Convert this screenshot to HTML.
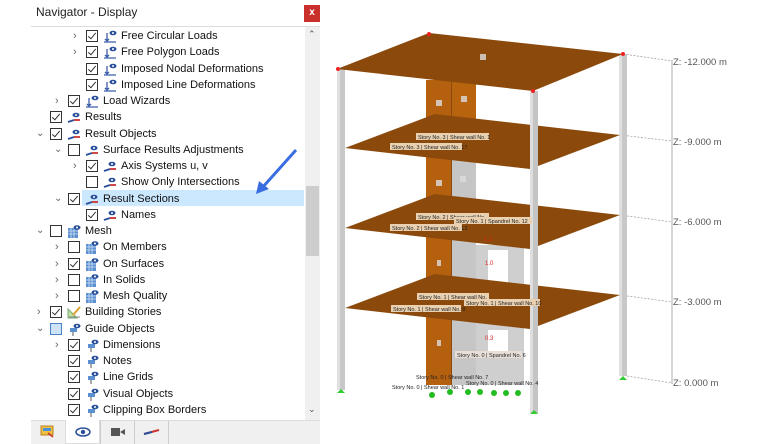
<!DOCTYPE html>
<html><head><meta charset="utf-8"><style>
*{margin:0;padding:0;box-sizing:border-box}
body{width:760px;height:444px;background:#fff;position:relative;overflow:hidden;font-family:"Liberation Sans",sans-serif;font-size:11px;color:#000}
.r{position:absolute;height:16px;line-height:16px;white-space:nowrap}
.cb{position:absolute;top:2px;width:12px;height:12px;border:1px solid #333;background:#fff}
.cb.k::after{content:"";position:absolute;left:3px;top:0px;width:3px;height:7px;border:solid #333;border-width:0 1.3px 1.3px 0;transform:rotate(40deg)}
.ch{position:absolute;top:0;color:#666;font-size:11px}
.ic{position:absolute;top:1px;width:14px;height:14px}
.t{position:absolute;top:0;color:#111}
</style></head><body>
<div style="position:absolute;left:31px;top:0;width:289px;height:444px;background:#fff"></div>
<div style="position:absolute;left:36px;top:5px;font-size:12px;color:#222">Navigator - Display</div>
<div style="position:absolute;left:304px;top:5px;width:16px;height:17px;background:#c9302c;color:#fff;font-size:10px;font-weight:bold;text-align:center;line-height:16px">x</div>
<div style="position:absolute;left:31px;top:26px;width:289px;height:1px;background:#ddd"></div>
<div style="position:absolute;left:305px;top:27px;width:15px;height:393px;background:#f0f0f0"></div>
<div style="position:absolute;left:306px;top:186px;width:13px;height:70px;background:#cdcdcd"></div>
<div style="position:absolute;left:308px;top:29px;font-size:9px;color:#555">&#8963;</div>
<div style="position:absolute;left:308px;top:404px;font-size:9px;color:#555">&#8964;</div>
<div style="position:absolute;left:82px;top:190px;width:222px;height:16px;background:#cce8ff"></div>
<div id="tree"></div>
<div style="position:absolute;left:31px;top:420px;width:289px;height:24px;background:#f0f0f0;border-top:1px solid #ddd"></div>
<div style="position:absolute;left:65px;top:420px;width:35px;height:24px;background:#fff;border:1px solid #ddd;border-top:none"></div>
<div style="position:absolute;left:100px;top:421px;width:1px;height:23px;background:#ccc"></div>
<div style="position:absolute;left:134px;top:421px;width:1px;height:23px;background:#ccc"></div>
<div style="position:absolute;left:168px;top:421px;width:1px;height:23px;background:#ccc"></div>
<svg style="position:absolute;left:40px;top:424px" width="16" height="14"><rect x="1" y="2" width="12" height="9" fill="#f0c040" stroke="#c08020"/><rect x="3" y="4" width="8" height="3" fill="#4a90d9"/><path d="M8 9l5 4" stroke="#c33" stroke-width="1.5"/></svg>
<svg style="position:absolute;left:75px;top:427px" width="16" height="10"><ellipse cx="8" cy="5" rx="7" ry="4" fill="#fff" stroke="#2a4f9a" stroke-width="1.5"/><circle cx="8" cy="5" r="2.2" fill="#2a4f9a"/></svg>
<svg style="position:absolute;left:110px;top:427px" width="16" height="10"><rect x="1" y="1" width="9" height="8" fill="#555"/><path d="M10 5l5-3v6z" fill="#555"/></svg>
<svg style="position:absolute;left:143px;top:427px" width="18" height="10"><path d="M1 7L16 3" stroke="#c33" stroke-width="2"/><path d="M1 7L9 5" stroke="#2a4f9a" stroke-width="2"/></svg>
<script>
var rows=[[3,'>',1,'Free Circular Loads','L'],[3,'>',1,'Free Polygon Loads','L'],[3,'',1,'Imposed Nodal Deformations','L'],[3,'',1,'Imposed Line Deformations','L'],[2,'>',1,'Load Wizards','L'],[1,'',1,'Results','R'],[1,'v',1,'Result Objects','R'],[2,'v',0,'Surface Results Adjustments','R'],[3,'>',1,'Axis Systems u, v','R'],[3,'',0,'Show Only Intersections','R'],[2,'v',1,'Result Sections','R'],[3,'',1,'Names','R'],[1,'v',0,'Mesh','M'],[2,'>',0,'On Members','M'],[2,'>',1,'On Surfaces','M'],[2,'>',0,'In Solids','M'],[2,'>',0,'Mesh Quality','M'],[1,'>',1,'Building Stories','B'],[1,'v',2,'Guide Objects','G'],[2,'>',1,'Dimensions','G'],[2,'',1,'Notes','G'],[2,'',1,'Line Grids','G'],[2,'',1,'Visual Objects','G'],[2,'',1,'Clipping Box Borders','G'],[2,'',0,'','G']];
var ic={L:'<svg class="ic" viewBox="0 0 14 14"><path d="M4 4v8M2 10l2 2 2-2M1 13h12" stroke="#3a5ea8" stroke-width="1.3" fill="none"/><ellipse cx="10" cy="4" rx="3.5" ry="2.3" fill="#2a4f9a"/><circle cx="10" cy="4" r="1" fill="#fff"/></svg>',
R:'<svg class="ic" viewBox="0 0 14 14"><path d="M1 12L7 10" stroke="#2a4f9a" stroke-width="1.8"/><path d="M7 10L13 10" stroke="#c33" stroke-width="1.8"/><ellipse cx="9" cy="5" rx="3.5" ry="2.3" fill="#2a4f9a"/><circle cx="9" cy="5" r="1" fill="#fff"/></svg>',
M:'<svg class="ic" viewBox="0 0 14 14"><rect x="1" y="4" width="10" height="10" fill="#5a8fd0"/><path d="M1 7h10M1 10h10M4 4v10M7 4v10" stroke="#cfe0f5" stroke-width="0.8"/><ellipse cx="10" cy="3.5" rx="3.5" ry="2.3" fill="#2a4f9a"/><circle cx="10" cy="3.5" r="1" fill="#fff"/></svg>',
B:'<svg class="ic" viewBox="0 0 14 14"><path d="M1 13L1 4 10 13Z" fill="#bfe0a0" stroke="#7a7" /><path d="M6 10L13 2" stroke="#e0a030" stroke-width="2"/><path d="M2 12h11" stroke="#888"/></svg>',
G:'<svg class="ic" viewBox="0 0 14 14"><path d="M3 6h7v4H3z" fill="#5a8fd0"/><path d="M6 10v4" stroke="#555"/><ellipse cx="10" cy="4" rx="3.5" ry="2.3" fill="#2a4f9a"/><circle cx="10" cy="4" r="1" fill="#fff"/></svg>'};
var h='';rows.forEach(function(r,i){var y=Math.round(28+i*16.25);var cb=32+r[0]*18;
h+='<div class="r" style="left:0;top:'+y+'px;width:304px">';
if(r[1]=='>')h+='<span class="ch" style="left:'+(cb-13)+'px">&#8250;</span>';
if(r[1]=='v')h+='<span class="ch" style="left:'+(cb-14)+'px;font-size:10px">&#8964;</span>';
var cls='cb'+(r[2]==1?' k':'');var st=r[2]==2?'background:#cfe3f7;border-color:#4a80c8;':'';
h+='<span class="'+cls+'" style="left:'+cb+'px;'+st+'"></span>';
h+='<span style="position:absolute;left:'+(cb+17)+'px;top:0">'+ic[r[4]]+'</span>';
h+='<span class="t" style="left:'+(cb+35)+'px">'+r[3]+'</span></div>';});
document.getElementById('tree').innerHTML=h;
</script>
<svg style="position:absolute;left:0;top:0" width="760" height="444">
<path d="M296 150L262 188" stroke="#3a6ee0" stroke-width="3"/><path d="M256 194l3-13 10 8z" fill="#3a6ee0"/>
<g stroke="#999" stroke-width="0.7" stroke-dasharray="2,1.5" fill="none"><path d="M623 54L672 61M620 135L672 141M620 215L672 222M620 295L672 302M627 376L672 383"/></g>
<path d="M672 60V384" stroke="#999" stroke-width="0.8"/>
<g font-family="Liberation Sans" font-size="9.5" fill="#555"><text x="673" y="65">Z: -12.000 m</text><text x="673" y="145">Z: -9.000 m</text><text x="673" y="225">Z: -6.000 m</text><text x="673" y="305">Z: -3.000 m</text><text x="673" y="386">Z: 0.000 m</text></g>
<rect x="619" y="54" width="8" height="322" fill="#c8c8c8"/><rect x="619" y="54" width="3" height="322" fill="#e0e0e0"/>
<rect x="337" y="69" width="8" height="321" fill="#c8c8c8"/><rect x="337" y="69" width="3" height="321" fill="#e0e0e0"/>
<rect x="452" y="160" width="24" height="225" fill="#c6c6c6"/>
<rect x="476" y="245" width="48" height="140" fill="#cfcfcf"/>
<rect x="488" y="250" width="20" height="40" fill="#fff"/><rect x="488" y="330" width="20" height="25" fill="#fff"/>
<rect x="452" y="80" width="24" height="75" fill="#b8640e"/>
<rect x="426" y="80" width="26" height="305" fill="#b5600f"/><rect x="451" y="80" width="1" height="305" fill="#8a4a10"/>
<g fill="#8b4a0c"><path d="M345 308L435 274 620 295 530 329Z"/><path d="M345 228L435 194 620 215 530 249Z"/><path d="M345 148L435 114 620 135 530 169Z"/><path d="M337 69L429 33 623 54 533 91Z"/></g>
<rect x="530" y="91" width="8" height="322" fill="#c4c4c4"/><rect x="530" y="91" width="3" height="322" fill="#dedede"/>
<g fill="#3c3"><path d="M337 393l4-4 4 4z"/><path d="M530 414l4-4 4 4z"/><path d="M619 380l4-4 4 4z"/></g>
<g fill="#2b2" ><circle cx="432" cy="395" r="3"/><circle cx="450" cy="392" r="3"/><circle cx="468" cy="392" r="3"/><circle cx="480" cy="392" r="3"/><circle cx="494" cy="393" r="3"/><circle cx="506" cy="393" r="3"/><circle cx="518" cy="393" r="3"/></g>
<g font-family="Liberation Sans" font-size="5.5" fill="#222">
<rect x="416" y="133" width="73" height="7" fill="#e8d0b0"/><text x="418" y="139">Story No. 3 | Shear wall No. 1</text>
<rect x="390" y="143" width="72" height="7" fill="#e8d0b0"/><text x="392" y="149">Story No. 3 | Shear wall No. 17</text>
<rect x="416" y="213" width="73" height="7" fill="#e8d0b0"/><text x="418" y="219">Story No. 2 | Shear wall No.</text>
<rect x="454" y="217" width="78" height="7" fill="#e8d0b0"/><text x="456" y="223">Story No. 1 | Spandrel No. 12</text>
<rect x="390" y="224" width="72" height="7" fill="#e8d0b0"/><text x="392" y="230">Story No. 2 | Shear wall No. 13</text>
<rect x="417" y="293" width="72" height="7" fill="#e8d0b0"/><text x="419" y="299">Story No. 1 | Shear wall No.</text>
<rect x="464" y="299" width="76" height="7" fill="#e8d0b0"/><text x="466" y="305">Story No. 1 | Shear wall No. 10</text>
<rect x="391" y="305" width="70" height="7" fill="#e8d0b0"/><text x="393" y="311">Story No. 1 | Shear wall No. 8</text>
<rect x="455" y="351" width="67" height="7" fill="#e8e0d8"/><text x="457" y="357">Story No. 0 | Spandrel No. 6</text>
<text x="416" y="379">Story No. 0 | Shear wall No. 7</text>
<text x="466" y="385">Story No. 0 | Shear wall No. 4</text>
<text x="392" y="389">Story No. 0 | Shear wall No. 1</text>
</g>
<g fill="#d22" font-family="Liberation Sans" font-size="6"><text x="484" y="241">1.2</text><text x="485" y="265">1.0</text><text x="485" y="340">0.3</text></g>
<g fill="#e22"><circle cx="429" cy="34" r="2"/><circle cx="623" cy="54" r="2"/><circle cx="533" cy="91" r="2"/><circle cx="338" cy="69" r="2"/></g>
<g fill="#ddd" opacity=".8"><rect x="480" y="54" width="6" height="6"/><rect x="436" y="100" width="6" height="6"/><rect x="461" y="96" width="6" height="6"/><rect x="436" y="180" width="6" height="6"/><rect x="460" y="176" width="6" height="6"/><rect x="437" y="260" width="4" height="6"/><rect x="437" y="340" width="4" height="6"/></g>
</svg>
</body></html>
